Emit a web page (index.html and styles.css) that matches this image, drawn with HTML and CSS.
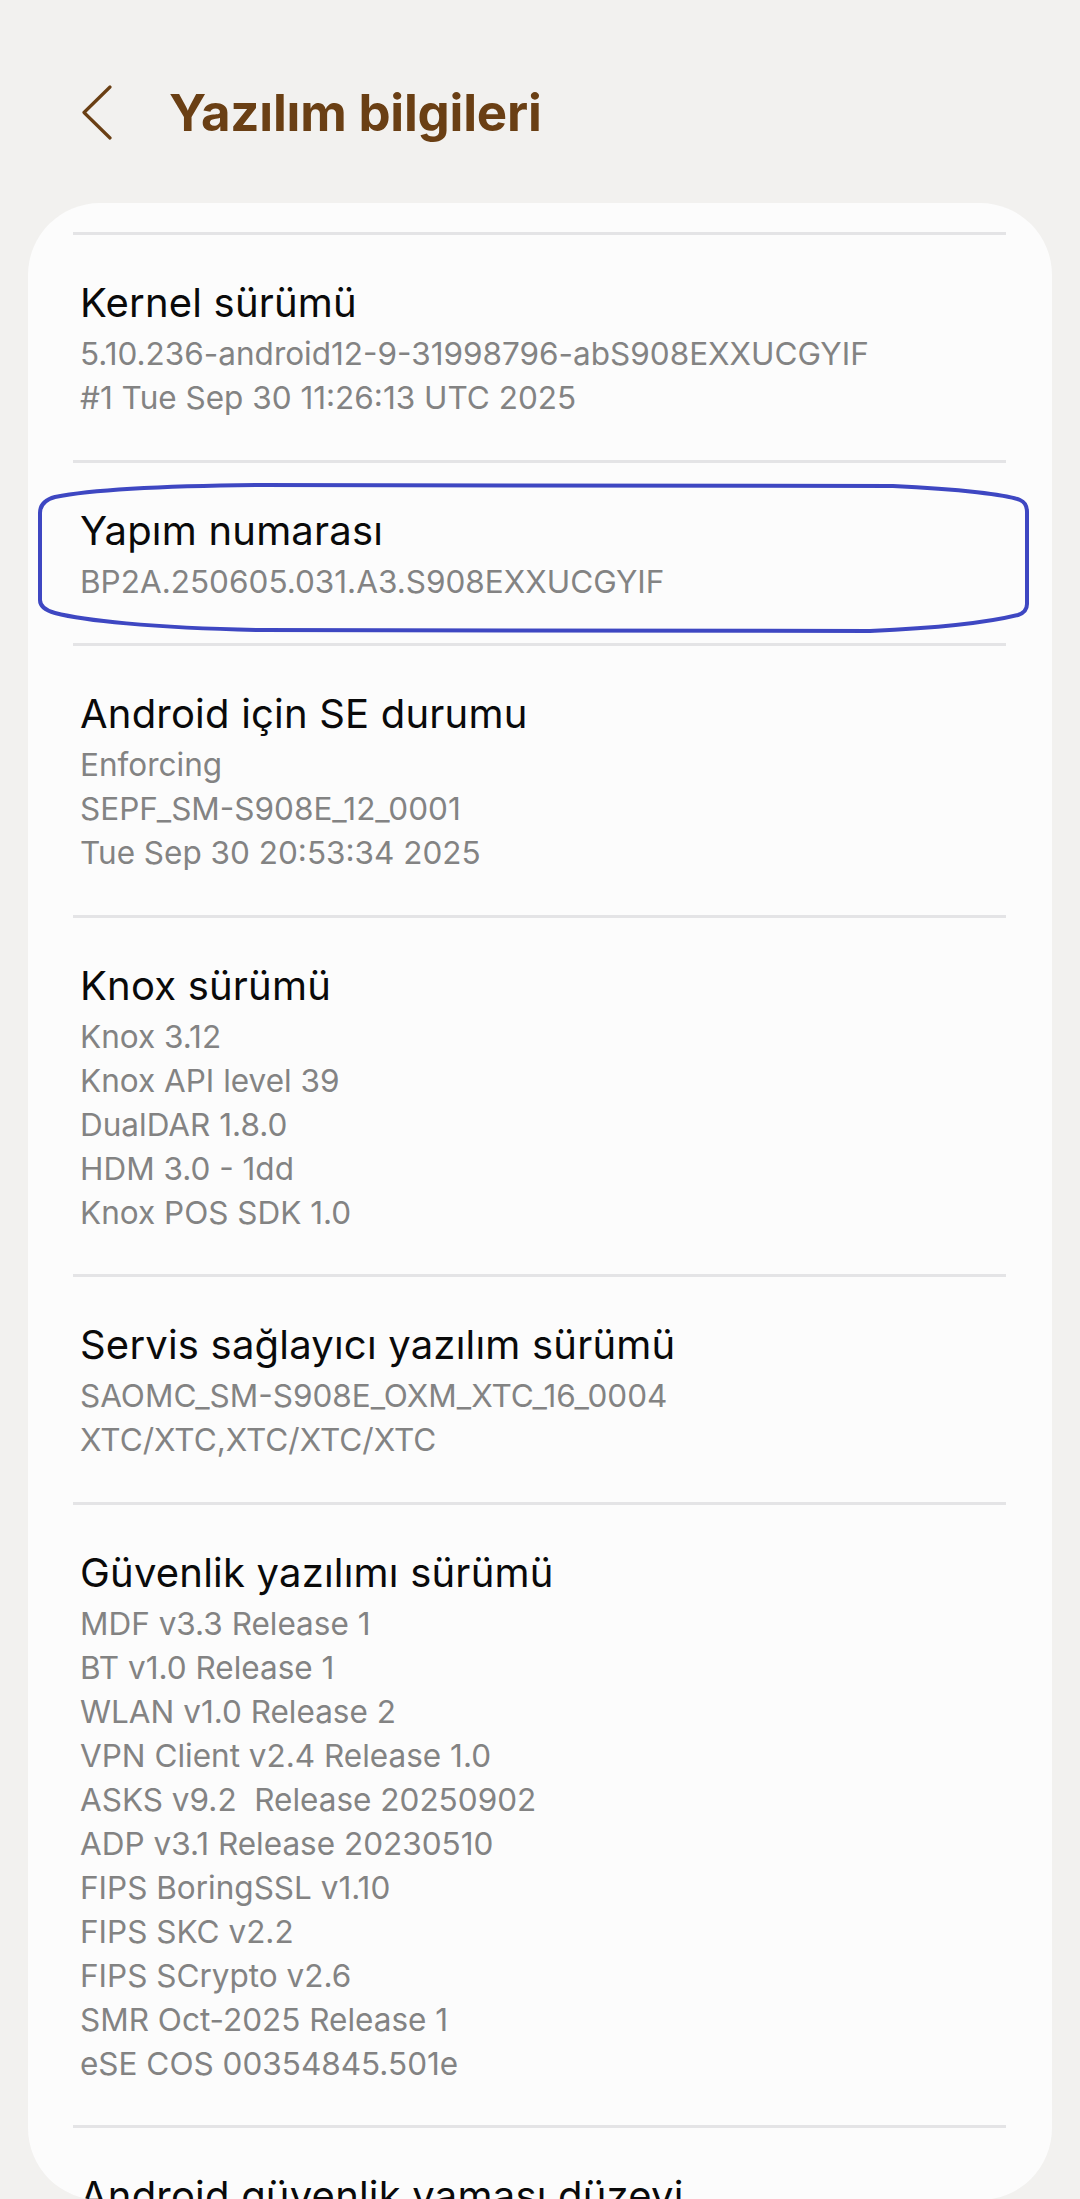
FILE: index.html
```html
<!DOCTYPE html>
<html lang="tr">
<head>
<meta charset="utf-8">
<title>Yazılım bilgileri</title>
<link rel="stylesheet" href="styles.css">
</head>
<body>
<div class="screen">
  <header class="header">
    <button class="back" aria-label="Geri">
      <svg width="34" height="56" viewBox="0 0 34 56">
        <path d="M30 3 L4 28.5 L30 54" fill="none" stroke="#6a3f14" stroke-width="3.2" stroke-linecap="round" stroke-linejoin="round"/>
      </svg>
    </button>
    <h1 class="title">Yazılım bilgileri</h1>
  </header>

  <main class="card">
    <div class="divider"></div>
    <section class="item">
      <div class="item-title">Kernel sürümü</div>
      <div class="item-sub">5.10.236-android12-9-31998796-abS908EXXUCGYIF</div>
      <div class="item-sub">#1 Tue Sep 30 11:26:13 UTC 2025</div>
    </section>
    <div class="divider"></div>
    <section class="item">
      <div class="item-title">Yapım numarası</div>
      <div class="item-sub">BP2A.250605.031.A3.S908EXXUCGYIF</div>
    </section>
    <div class="divider"></div>
    <section class="item">
      <div class="item-title">Android için SE durumu</div>
      <div class="item-sub">Enforcing</div>
      <div class="item-sub">SEPF_SM-S908E_12_0001</div>
      <div class="item-sub">Tue Sep 30 20:53:34 2025</div>
    </section>
    <div class="divider"></div>
    <section class="item">
      <div class="item-title">Knox sürümü</div>
      <div class="item-sub">Knox 3.12</div>
      <div class="item-sub">Knox API level 39</div>
      <div class="item-sub">DualDAR 1.8.0</div>
      <div class="item-sub">HDM 3.0 - 1dd</div>
      <div class="item-sub">Knox POS SDK 1.0</div>
    </section>
    <div class="divider"></div>
    <section class="item">
      <div class="item-title">Servis sağlayıcı yazılım sürümü</div>
      <div class="item-sub">SAOMC_SM-S908E_OXM_XTC_16_0004</div>
      <div class="item-sub">XTC/XTC,XTC/XTC/XTC</div>
    </section>
    <div class="divider"></div>
    <section class="item">
      <div class="item-title">Güvenlik yazılımı sürümü</div>
      <div class="item-sub">MDF v3.3 Release 1</div>
      <div class="item-sub">BT v1.0 Release 1</div>
      <div class="item-sub">WLAN v1.0 Release 2</div>
      <div class="item-sub">VPN Client v2.4 Release 1.0</div>
      <div class="item-sub">ASKS v9.2&nbsp; Release 20250902</div>
      <div class="item-sub">ADP v3.1 Release 20230510</div>
      <div class="item-sub">FIPS BoringSSL v1.10</div>
      <div class="item-sub">FIPS SKC v2.2</div>
      <div class="item-sub">FIPS SCrypto v2.6</div>
      <div class="item-sub">SMR Oct-2025 Release 1</div>
      <div class="item-sub">eSE COS 00354845.501e</div>
    </section>
    <div class="divider"></div>
    <section class="item">
      <div class="item-title">Android güvenlik yaması düzeyi</div>
      <div class="item-sub">1 Ekim 2025</div>
    </section>
  </main>

  <svg class="highlight" width="1080" height="700" viewBox="0 0 1080 700" aria-hidden="true">
    <path d="M260 485 L893 486 C960 489 1008 495 1020 500 Q1027 503 1027 512 L1027 604 Q1027 612 1018 615 C990 622 940 628 870 631 L260 630 C150 628 82 620 55 613 Q40 609 40 600 L40 513 Q40 501 55 497 C90 490 160 486 260 485 Z" fill="none" stroke="#3e47c2" stroke-width="4"/>
  </svg>
</div>
</body>
</html>
```

FILE: styles.css
```css
* { box-sizing: border-box; }

html, body {
  margin: 0;
  padding: 0;
  background: #f2f1ef;
}

.screen {
  position: relative;
  width: 1080px;
  height: 2199px;
  overflow: hidden;
  background: #f2f1ef;
  font-family: Inter, "Noto Sans", Roboto, sans-serif;
}

.header {
  height: 203px;
  padding: 21px 0 0 80px;
  display: flex;
  align-items: center;
}

.back {
  border: 0;
  background: none;
  padding: 0;
  margin: 0;
  width: 89px;
  height: 60px;
  display: flex;
  align-items: center;
}

.title {
  margin: 0;
  font-size: 51px;
  font-weight: 700;
  color: #6a3f14;
  letter-spacing: -0.2px;
}

.card {
  display: block;
  margin: 0 28px;
  height: 1997px;
  background: #fcfcfc;
  border-radius: 72px;
  overflow: hidden;
  padding-top: 29px;
}

.divider {
  height: 3px;
  background: #e4e4e6;
  margin: 0 46px 0 45px;
}

.item {
  padding: 39.25px 40px 39.25px 52px;
}

.item-title {
  font-size: 40px;
  line-height: 58px;
  letter-spacing: 0.2px;
  color: #0a0a0a;
  white-space: nowrap;
}

.item-sub {
  font-size: 31.5px;
  line-height: 44px;
  color: #838383;
  white-space: nowrap;
}

.highlight {
  position: absolute;
  top: 0;
  left: 0;
  pointer-events: none;
}
```
